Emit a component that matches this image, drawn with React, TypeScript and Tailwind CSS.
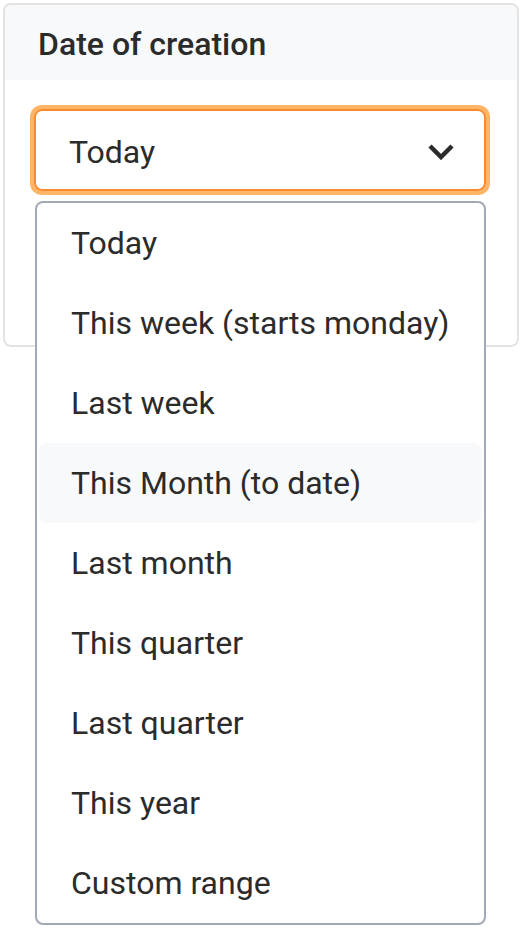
import React from "react";

const options = [
  "Today",
  "This week (starts monday)",
  "Last week",
  "This Month (to date)",
  "Last month",
  "This quarter",
  "Last quarter",
  "This year",
  "Custom range",
];

function Chevron() {
  return (
    <svg width="28" height="17" viewBox="0 0 28 17" fill="none">
      <path d="M3 3 L14 14 L25 3" stroke="#2b2b2b" strokeWidth="4.5" strokeLinejoin="miter" />
    </svg>
  );
}

export default function App() {
  const hovered = "This Month (to date)";
  return (
    <div
      className="relative w-[522px] h-[930px] bg-white text-[#2b2b2b]"
      style={{ fontFamily: "Roboto, 'Liberation Sans', sans-serif" }}
    >
      <div className="pt-[3px] pl-[3px]">
        <div className="w-[516px] h-[344px] border-2 border-[#e3e3e3] rounded-[8px] bg-white">
          <div className="h-[75px] bg-[#f8f9fa] rounded-t-[6px] flex items-center pl-[33px] pt-[3px]">
            <span className="text-[32px] font-medium">Date of creation</span>
          </div>
          <div className="pt-[29px] pl-[29px]">
            <div className="relative w-[452px]">
              <div className="h-[82px] border-2 border-[#fb8a2e] rounded-[8px] ring-4 ring-[#ffb466] flex items-center justify-between pl-[33px] pr-[29px] pt-[3px]">
                <span className="text-[32px]">Today</span>
                <Chevron />
              </div>
              <div className="absolute left-[1px] top-full mt-[10px] w-[451px] border-2 border-[#a3a9b6] rounded-[8px] bg-white px-[2px] z-10">
                {options.map((o) => (
                  <div
                    key={o}
                    className={`h-[80px] flex items-center pl-[32px] rounded-[8px] text-[32px] ${
                      o === hovered ? "bg-[#f8f9fa]" : ""
                    }`}
                  >
                    {o}
                  </div>
                ))}
              </div>
            </div>
          </div>
        </div>
      </div>
    </div>
  );
}
